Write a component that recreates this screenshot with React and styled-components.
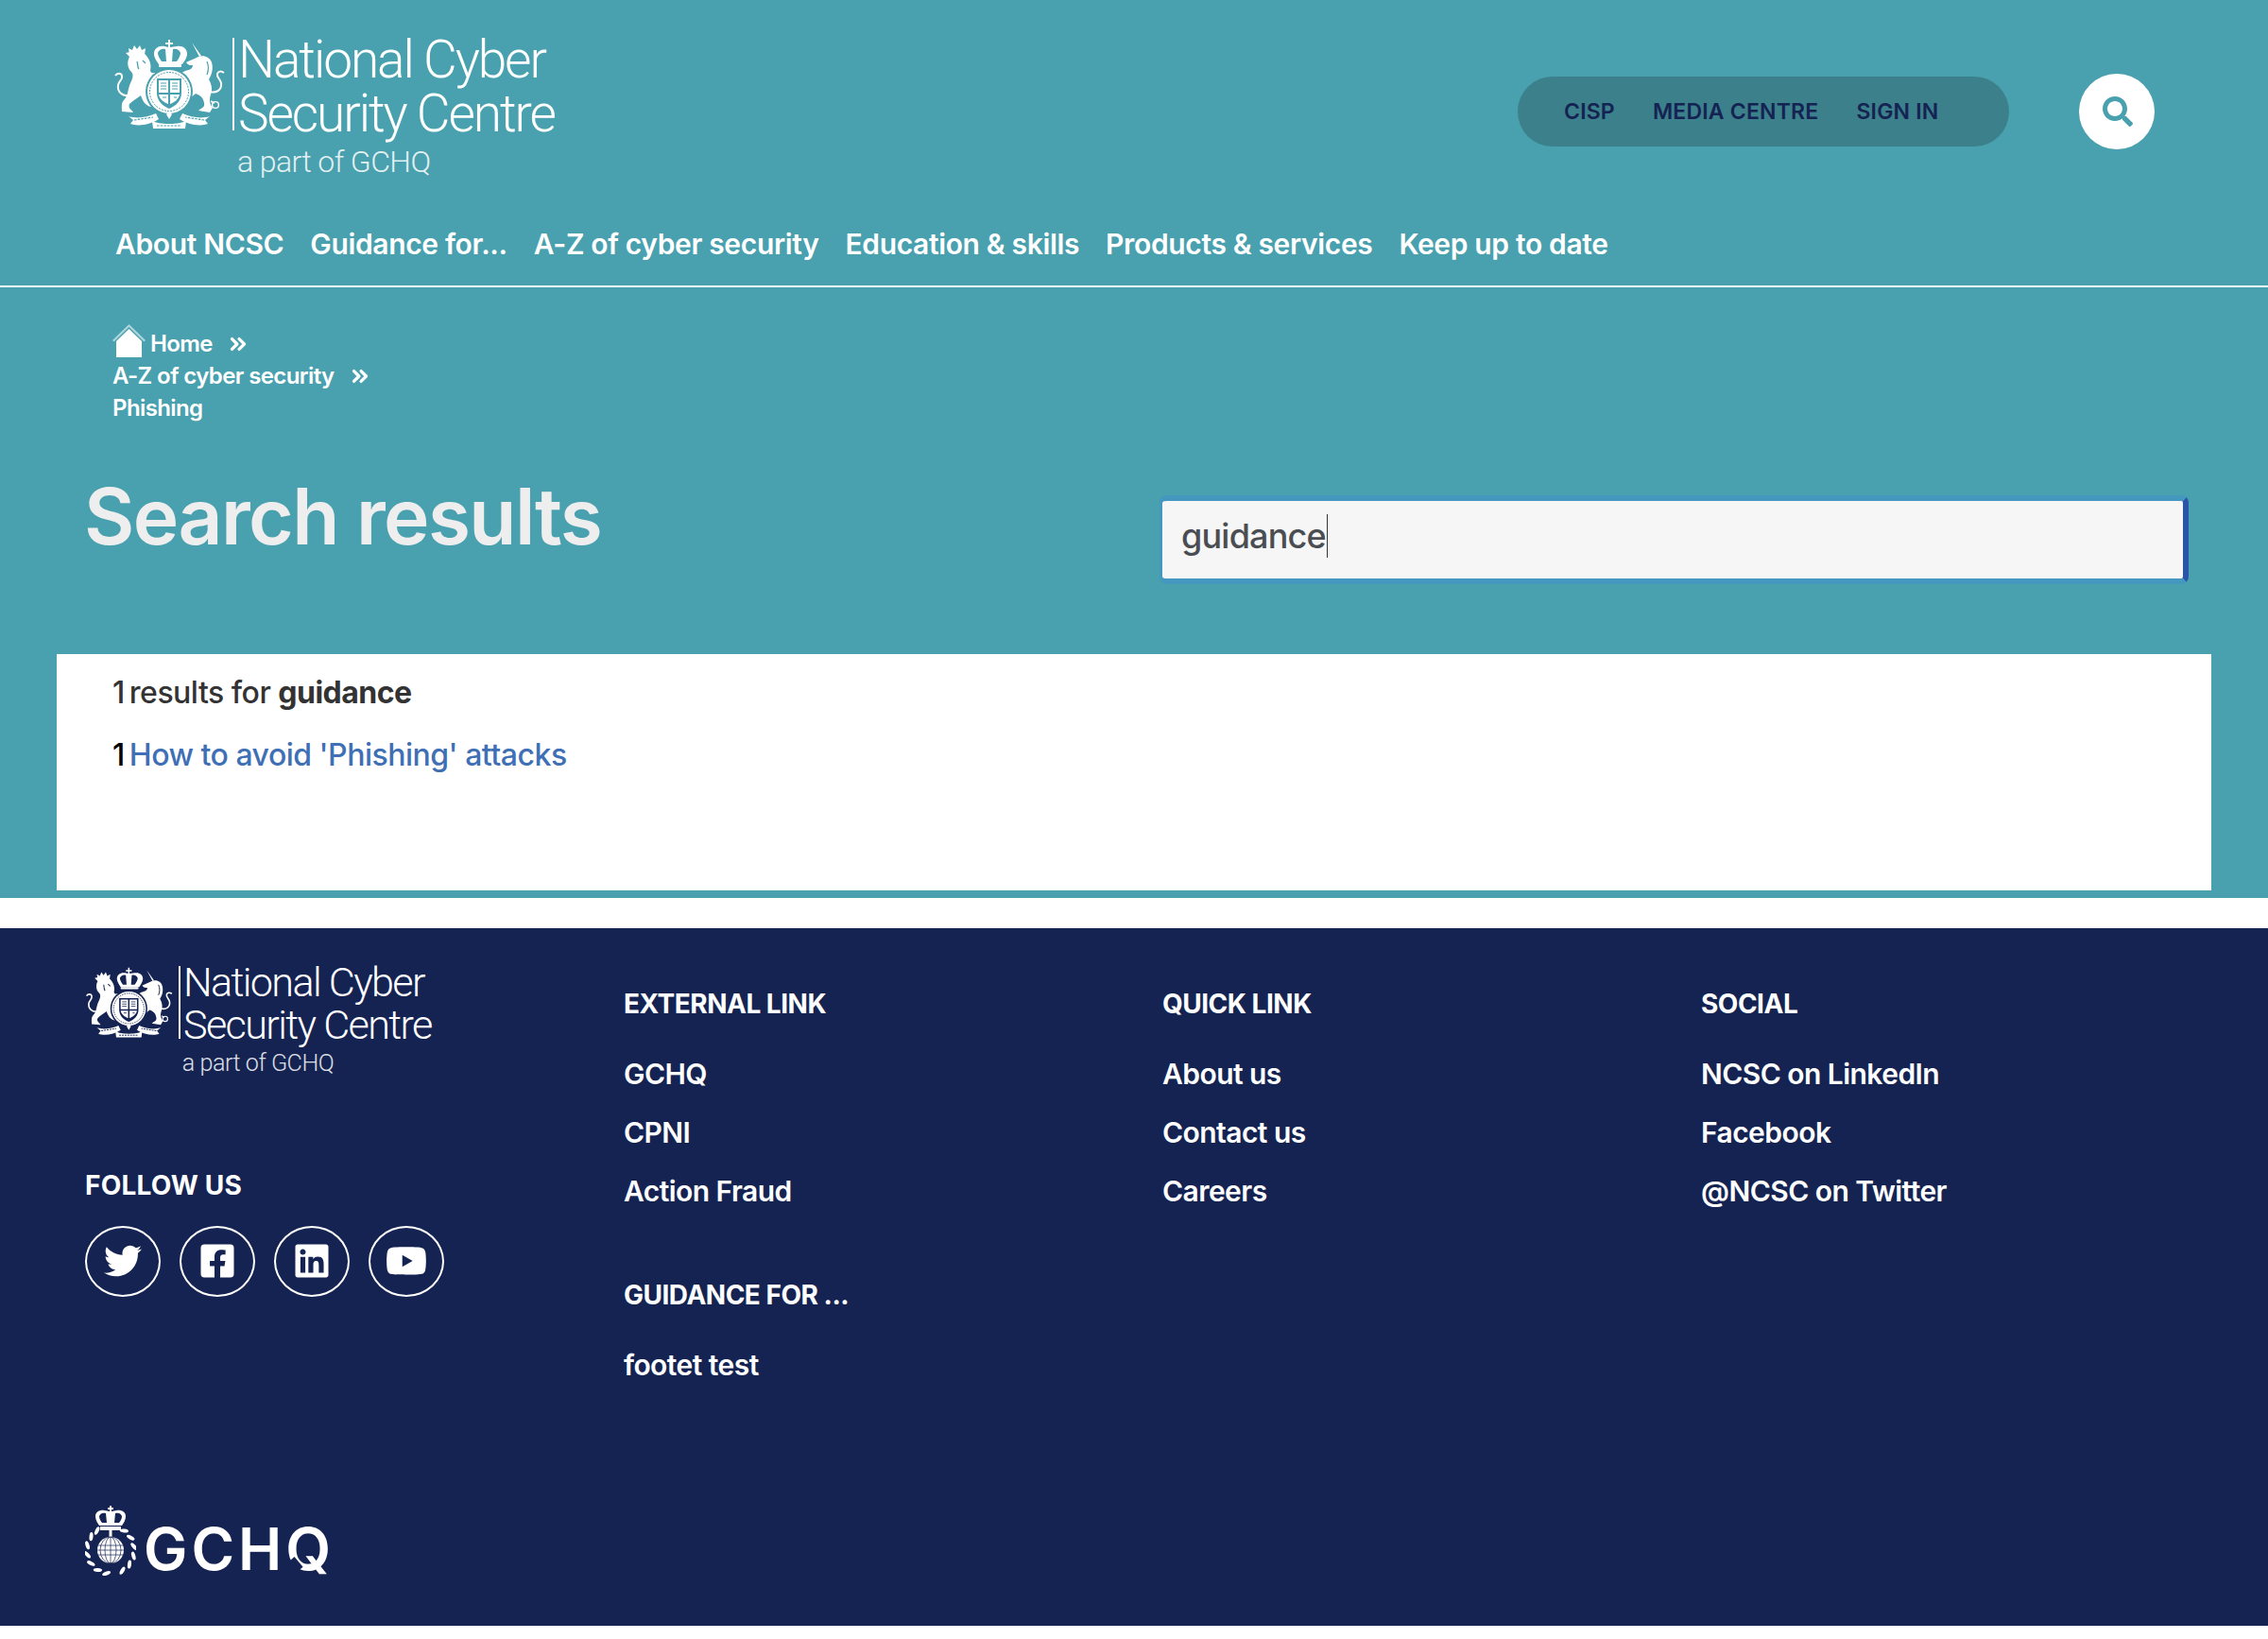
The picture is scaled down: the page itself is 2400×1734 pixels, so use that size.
import { createGlobalStyle } from 'styled-components';
import styled from 'styled-components';
import { FaSearch, FaTwitter, FaFacebookSquare, FaLinkedin, FaYoutube } from 'react-icons/fa';
import { ChevronsRight } from 'lucide-react';

const TEAL = '#49a0ae';
const NAVY = '#152352';

const GlobalStyle = createGlobalStyle`
  html, body {
    margin: 0;
    background: #fff;
    font-family: Inter, "Open Sans", sans-serif;
  }
  a { color: inherit; text-decoration: none; }
`;

const TealSection = styled.div`
  background: ${TEAL};
  height: 950px;
  margin-bottom: 32px;
  display: flex;
  flex-direction: column;
`;

const Masthead = styled.header`
  display: flex;
  align-items: flex-start;
  justify-content: space-between;
  padding: 40px 120px 0;
  height: 198px;
  box-sizing: border-box;
`;

const LogoWrap = styled.div`
  display: grid;
  grid-template-columns: auto auto;
  justify-content: start;
  color: #fff;
`;

const LogoMark = styled.div`
  display: flex;
  align-items: center;
  gap: ${({ $s }) => 8 * $s}px;
  svg { width: ${({ $s }) => 118 * $s}px; height: ${({ $s }) => 96 * $s}px; }
`;

const LogoTitle = styled.div`
  display: flex;
  align-items: center;
  height: ${({ $s }) => 98 * $s}px;
  border-left: 2px solid currentColor;
  padding-left: ${({ $s }) => 4 * $s}px;
  font-family: Roboto, sans-serif;
  font-weight: 300;
  font-size: ${({ $s }) => 55 * $s}px;
  line-height: ${({ $s }) => 57 * $s}px;
  letter-spacing: ${({ $s }) => -2.1 * $s}px;
  white-space: nowrap;
`;

const LogoLines = styled.div`
  margin-top: ${({ $s }) => 6 * $s}px;
`;

const LogoTag = styled.div`
  grid-column: 1 / -1;
  padding-left: ${({ $s }) => 131 * $s}px;
  margin-top: ${({ $s }) => 15 * $s}px;
  font-family: Roboto, sans-serif;
  font-weight: 300;
  font-size: ${({ $s }) => 32 * $s}px;
  line-height: ${({ $s }) => 36 * $s}px;
  letter-spacing: ${({ $s }) => -0.6 * $s}px;
  opacity: 0.85;
`;

const TopRight = styled.div`
  display: flex;
  align-items: center;
  gap: 74px;
  margin-top: 38px;
`;

const UtilityPill = styled.nav`
  display: flex;
  align-items: center;
  gap: 40px;
  width: 520px;
  height: 74px;
  box-sizing: border-box;
  padding-left: 49px;
  border-radius: 37px;
  background: #3b808b;
`;

const UtilityLink = styled.a`
  color: ${NAVY};
  font-size: 23px;
  font-weight: 600;
  letter-spacing: 0.2px;
`;

const SearchButton = styled.button`
  width: 80px;
  height: 80px;
  padding: 0 0 0 2px;
  border: 0;
  border-radius: 50%;
  background: #fff;
  color: ${TEAL};
  display: flex;
  align-items: center;
  justify-content: center;
  font-size: 32px;
`;

const MainNav = styled.nav`
  display: flex;
  align-items: center;
  gap: 28px;
  height: 108px;
  padding: 17px 122px 0;
  margin-top: -2px;
  border-bottom: 2px solid #fff;
  box-sizing: border-box;
`;

const MainNavLink = styled.a`
  color: #fff;
  font-size: 30px;
  font-weight: 600;
  letter-spacing: -0.35px;
  white-space: nowrap;
`;

const Breadcrumbs = styled.div`
  padding: 43px 119px 0;
  color: #fff;
  font-size: 24px;
  font-weight: 600;
  letter-spacing: -0.6px;
  line-height: 34px;
`;

const Crumb = styled.div`
  display: flex;
  align-items: center;
  height: 34px;
`;

const CrumbSep = styled.span`
  display: inline-flex;
  margin-left: 14px;
`;

const HomeIconWrap = styled.span`
  display: inline-flex;
  margin-right: 5px;
  margin-top: -8px;
`;

const TitleRow = styled.div`
  display: flex;
  padding: 75px 84px 0 89px;
  justify-content: space-between;
  align-items: flex-start;
`;

const PageTitle = styled.h1`
  margin: -27px 0 0;
  color: #eee;
  font-size: 82px;
  font-weight: 600;
  line-height: 100px;
  letter-spacing: -1.6px;
`;

const SearchField = styled.div`
  width: 1089px;
  height: 94px;
  box-sizing: border-box;
  display: flex;
  align-items: center;
  padding: 0 0 8px 20px;
  background: #f6f6f6;
  border-style: solid;
  border-width: 6px 6px 6px 3px;
  border-color: #4497be #2a54a8 #4497be #4497be;
  border-radius: 8px;
  color: #4a4d52;
  font-size: 36px;
  font-weight: 500;
  letter-spacing: -0.8px;
`;

const Caret = styled.span`
  display: inline-block;
  width: 1px;
  height: 46px;
  margin-left: 1px;
  background: #333;
`;

const ResultsPanel = styled.main`
  margin: 74px 60px 0;
  height: 250px;
  box-sizing: border-box;
  background: #fff;
  padding: 21px 59px 0;
  font-size: 32px;
  font-weight: 500;
  line-height: 40px;
  letter-spacing: -0.5px;
  color: #333;
`;

const ResultLine = styled.div`
  margin-bottom: 26px;
  strong { font-weight: 700; }
`;

const ResultIndex = styled.span`
  color: ${({ $dark }) => ($dark ? '#000' : '#333')};
  word-spacing: -3px;
`;

const ResultLink = styled.a`
  color: #3f6fb5;
`;

const Footer = styled.footer`
  background: ${NAVY};
  height: 738px;
  box-sizing: border-box;
  padding: 40px 90px 46px;
  color: #fff;
  display: flex;
  flex-direction: column;
`;

const FooterGrid = styled.div`
  display: grid;
  grid-template-columns: repeat(4, 570px);
`;

const FooterColumn = styled.div`
  padding-top: 20px;
`;

const BrandColumn = styled.div``;

const FollowHeading = styled.h4`
  margin: 95px 0 0;
  font-size: 28px;
  font-weight: 700;
  line-height: 40px;
  letter-spacing: 0.2px;
  text-transform: uppercase;
`;

const SocialRow = styled.div`
  display: flex;
  gap: 20px;
  margin-top: 23px;
`;

const SocialCircle = styled.a`
  width: 80px;
  height: 75px;
  box-sizing: border-box;
  border: 2px solid #fff;
  border-radius: 50%;
  display: flex;
  align-items: center;
  justify-content: center;
  font-size: ${({ $size }) => $size}px;
`;

const ColumnHeading = styled.h4`
  margin: ${({ $spaced }) => ($spaced ? '70px' : '0')} 0 34px;
  font-size: 28px;
  font-weight: 700;
  line-height: 40px;
  letter-spacing: -0.5px;
  text-transform: uppercase;
`;

const LinkList = styled.ul`
  list-style: none;
  margin: 0;
  padding: 0;
  display: flex;
  flex-direction: column;
  gap: 22px;
`;

const FooterLink = styled.a`
  display: block;
  font-size: 30px;
  font-weight: 600;
  line-height: 40px;
  letter-spacing: -0.55px;
`;

const GchqLogo = styled.div`
  margin-top: auto;
  display: flex;
  align-items: center;
  gap: 8px;
`;

const GchqMark = styled.svg`
  width: 54px;
  height: 74px;
`;

const GchqWord = styled.span`
  position: relative;
  top: 2px;
  font-size: 62px;
  font-weight: 600;
  line-height: 74px;
  letter-spacing: 4px;
  padding-top: 14px;

  /* the cut in the lower left of the Q */
  &::after {
    content: '';
    position: absolute;
    right: 37px;
    bottom: 14px;
    width: 8px;
    height: 14px;
    background: ${NAVY};
    transform: rotate(-40deg);
  }
`;

// royal arms, drawn roughly from the reference logo
function Crest({ detail }) {
  return (
    <svg viewBox="4 6 118 96" fill="#fff">
      {/* lion */}
      <path d="M21 23l-1-7 4 2 2-5 3 4 3-4 2 5 4-2-1 7z" />
      <path d="M21 25c-3 6-2 12 2 16 3 3 1 8-1 12-3 6-2 13-7 18-3 3-2 8-2 12l12 1c-1-3-6-4-4-9 3-3 8-6 12-9 2 6 5 11 11 12l6-1c-6-3-10-8-10-14 1-6 6-10 5-16 3 0 5-2 4-5-3 0-5 1-6-2 2-8-2-15-7-19-6-2-14-1-19 0z" />
      <path d="M29 30c1 2 0 6 2 8M35 29l3 3" stroke={detail} strokeWidth="1.3" fill="none" />
      <path d="M21 66c-8 1-13-4-12-11 1-5 5-5 4-10-1-3-5-3-7 0" stroke="#fff" strokeWidth="2" fill="none" />
      {/* unicorn */}
      <path d="M87 10l10 14-2 1z" />
      <path d="M94 25c5-2 12 0 14 6 2 7 0 13-3 18 3 5 4 11 2 16-2 6-1 10 2 14l-3 5-12-2c3-3 7-3 6-8-1-6-4-8-9-10-4 3-8 8-9 13l-10 2-2-3c5-2 8-6 9-11 1-7 1-12-2-17-3 0-5 2-7 0 2-4 6-6 10-8 4-1 8-2 8-6-3 0-5 0-7-3 3-2 7-3 13-6z" />
      <path d="M103 30c2 5 2 9 0 14" stroke={detail} strokeWidth="1.2" fill="none" />
      <path d="M106 62c7 2 13-2 12-9-1-5-5-6-4-10 1-3 4-3 7-1" stroke="#fff" strokeWidth="2" fill="none" />
      <circle cx="112" cy="76" r="3.4" fill="none" stroke="#fff" strokeWidth="1.4" />
      <path d="M107 72l4 2" stroke="#fff" strokeWidth="1.4" />
      {/* garter and shield */}
      <circle cx="63" cy="62" r="25" fill={detail} />
      <circle cx="63" cy="62" r="23" />
      <circle cx="63" cy="62" r="20.5" fill="none" stroke={detail} strokeWidth="1" strokeDasharray="2 1.2" />
      <path d="M50 48h26v15c0 9-6 14-13 17-7-3-13-8-13-17z" fill={detail} />
      <path d="M52 50h10v13H52zM64 50h10v13H64zM52 65h10v10c-5-2-9-5-10-10zM64 65h10c-1 5-5 8-10 10z" />
      <path d="M54 53h6M54 56h6M54 59h6M66 53h6M66 56h6M66 59h6M56 68h4M68 68h3" stroke={detail} strokeWidth="1" />
      {/* crown */}
      <path d="M62 7h2v3h3v2h-3v3l7-1c6-1 11 2 11 8 0 4-3 8-5 11H52c-2-3-5-7-5-11 0-6 5-9 11-8l4 1v-3h-3v-2h3z" />
      <path d="M51 21c1-3 4-5 8-4l1 13h-5c-2-3-4-6-4-9zM75 21c-1-3-4-5-8-4l-1 13h5c2-3 4-6 4-9z" fill={detail} />
      <rect x="52" y="33" width="24" height="3" rx="1" />
      {/* motto */}
      <path d="M20 88c9 3 20 1 29-3l3 6c-9 6-22 8-30 5l3-4z" />
      <path d="M106 88c-9 3-20 1-29-3l-3 6c9 6 22 8 30 5l-3-4z" />
      <path d="M45 93c5 2 9 3 18 3s13-1 18-3l-1 8H46z" />
      <path d="M26 92l20-3M100 92l-20-3M50 98h26" stroke={detail} strokeWidth="1.2" strokeDasharray="2.5 1.2" />
      <path d="M63 82l3 4-3 5-3-5z" />
    </svg>
  );
}

function NcscLogo({ detail, scale }) {
  return (
    <LogoWrap>
      <LogoMark $s={scale}>
        <Crest detail={detail} />
        <LogoTitle $s={scale}>
          <LogoLines $s={scale}>National Cyber<br />Security Centre</LogoLines>
        </LogoTitle>
      </LogoMark>
      <LogoTag $s={scale}>a part of GCHQ</LogoTag>
    </LogoWrap>
  );
}

const WREATH_ANGLES = [35, 58, 81, 104, 127, 150, 190, 213, 236, 259, 282, 305, 325];

function GchqCrest() {
  return (
    <GchqMark viewBox="0 0 54 74" fill="#fff">
      <path d="M26 0h2v2h2v2h-2v2l5-1c6-1 10 2 10 6 0 4-2 7-4 10H15c-2-3-4-6-4-10 0-4 4-7 10-6l5 1V4h-2V2h2z" />
      <path d="M15 11c1-3 4-4 7-3l1 10h-5c-2-2-3-5-3-7zM39 11c-1-3-4-4-7-3l-1 10h5c2-2 3-5 3-7z" fill={NAVY} />
      <rect x="16" y="22" width="22" height="4" />
      <rect x="25.5" y="26" width="3" height="8" />
      <circle cx="27" cy="47" r="14" />
      <g fill="none" stroke={NAVY} strokeWidth="0.7">
        <path d="M13 42h28M13 47h28M13 52h28M27 33v28" />
        <ellipse cx="27" cy="47" rx="6" ry="14" />
        <ellipse cx="27" cy="47" rx="11" ry="14" />
      </g>
      {WREATH_ANGLES.map(angle => (
        <ellipse
          key={angle}
          cx="27"
          cy="22"
          rx="2"
          ry="4.6"
          transform={`rotate(${angle} 27 47) rotate(60 27 22)`}
        />
      ))}
    </GchqMark>
  );
}

function HomeIcon() {
  return (
    <svg width="35" height="35" viewBox="0 0 35 35">
      <path d="M0 17L17.5 0 35 17l-1.6 1.6L17.5 3 1.6 18.6z" fill="#fff" opacity="0.55" />
      <path d="M4 35V18L17.5 5 31 18v17z" fill="#fff" />
    </svg>
  );
}

const mainNav = ['About NCSC', 'Guidance for...', 'A-Z of cyber security', 'Education & skills', 'Products & services', 'Keep up to date'];
const linkColumns = [
  { title: 'External link', links: ['GCHQ', 'CPNI', 'Action Fraud'], extra: { title: 'Guidance for ...', links: ['footet test'] } },
  { title: 'Quick link', links: ['About us', 'Contact us', 'Careers'] },
  { title: 'Social', links: ['NCSC on LinkedIn', 'Facebook', '@NCSC on Twitter'] },
];

const renderLinks = links => (
  <LinkList>
    {links.map(link => <li key={link}><FooterLink href="#">{link}</FooterLink></li>)}
  </LinkList>
);

export default function App() {
  return (
    <>
      <GlobalStyle />
      <TealSection>
        <Masthead>
          <NcscLogo detail={TEAL} scale={1} />
          <TopRight>
            <UtilityPill>
              <UtilityLink href="#">CISP</UtilityLink>
              <UtilityLink href="#">MEDIA CENTRE</UtilityLink>
              <UtilityLink href="#">SIGN IN</UtilityLink>
            </UtilityPill>
            <SearchButton aria-label="Search"><FaSearch /></SearchButton>
          </TopRight>
        </Masthead>
        <MainNav>
          {mainNav.map(item => <MainNavLink href="#" key={item}>{item}</MainNavLink>)}
        </MainNav>
        <Breadcrumbs>
          <Crumb>
            <HomeIconWrap><HomeIcon /></HomeIconWrap>
            Home
            <CrumbSep><ChevronsRight size={26} strokeWidth={3} /></CrumbSep>
          </Crumb>
          <Crumb>
            A-Z of cyber security
            <CrumbSep><ChevronsRight size={26} strokeWidth={3} /></CrumbSep>
          </Crumb>
          <Crumb>Phishing</Crumb>
        </Breadcrumbs>
        <TitleRow>
          <PageTitle>Search results</PageTitle>
          <SearchField>guidance<Caret /></SearchField>
        </TitleRow>
        <ResultsPanel>
          <ResultLine><ResultIndex>1 </ResultIndex>results for <strong>guidance</strong></ResultLine>
          <ResultLine>
            <ResultIndex $dark>1 </ResultIndex>
            <ResultLink href="#">How to avoid 'Phishing' attacks</ResultLink>
          </ResultLine>
        </ResultsPanel>
      </TealSection>
      <Footer>
        <FooterGrid>
          <BrandColumn>
            <NcscLogo detail={NAVY} scale={0.785} />
            <FollowHeading>Follow us</FollowHeading>
            <SocialRow>
              <SocialCircle href="#" $size={40}><FaTwitter /></SocialCircle>
              <SocialCircle href="#" $size={40}><FaFacebookSquare /></SocialCircle>
              <SocialCircle href="#" $size={40}><FaLinkedin /></SocialCircle>
              <SocialCircle href="#" $size={44}><FaYoutube /></SocialCircle>
            </SocialRow>
          </BrandColumn>
          {linkColumns.map(column => (
            <FooterColumn key={column.title}>
              <ColumnHeading>{column.title}</ColumnHeading>
              {renderLinks(column.links)}
              {column.extra && (
                <>
                  <ColumnHeading $spaced>{column.extra.title}</ColumnHeading>
                  {renderLinks(column.extra.links)}
                </>
              )}
            </FooterColumn>
          ))}
        </FooterGrid>
        <GchqLogo>
          <GchqCrest />
          <GchqWord>GCHQ</GchqWord>
        </GchqLogo>
      </Footer>
    </>
  );
}
